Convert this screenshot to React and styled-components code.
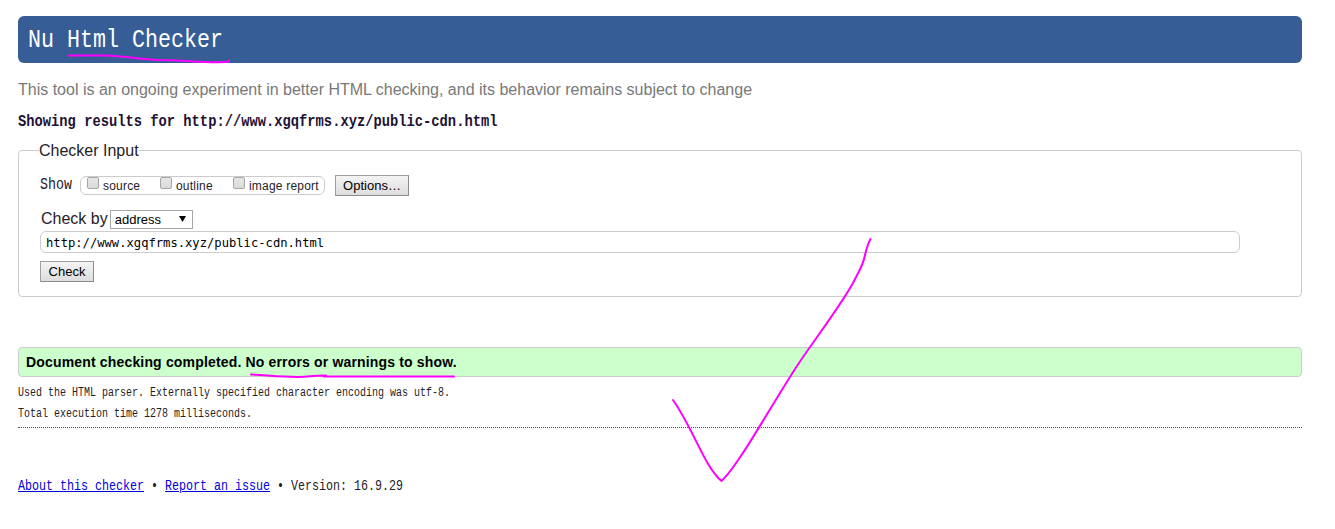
import React from 'react';
import styled, { createGlobalStyle } from 'styled-components';

const GlobalStyle = createGlobalStyle`
  * { box-sizing: border-box; }
  body { margin: 0; background: #fff; color: #1f2126; font-family: "Liberation Sans", Arial, sans-serif; }
`;

const Page = styled.div`
  position: relative;
  height: 529px;
  padding: 16px 33px 0 18px;
  overflow: hidden;
`;

/* Condensed monospace line: every glyph advances by half of the font size. */
const Mono = styled.span`
  display: block;
  width: max-content;
  font-family: "Liberation Mono", monospace;
  font-size: ${(p) => p.$size}px;
  font-weight: ${(p) => (p.$bold ? 700 : 400)};
  line-height: ${(p) => p.$line}px;
  white-space: pre;
  transform: scaleX(0.8333);
  transform-origin: 0 50%;
`;

const Banner = styled.h1`
  margin: 0;
  height: 47px;
  padding: 0 10px;
  border-radius: 6px;
  background: #365d95;
  color: #fff;
`;

const Tagline = styled.p`
  margin: 17px 0 0;
  font-size: 16px;
  line-height: 20px;
  color: #787878;
`;

const ResultsHeading = styled.h2`
  margin: 12px 0 0;
  height: 20px;
  color: #221133;
`;

const Form = styled.fieldset`
  margin: 9px 0 0;
  height: 156px;
  padding: 15px 21px 0;
  border: 1px solid #ccc;
  border-radius: 4px;
  min-width: 0;
`;

const Legend = styled.legend`
  margin-left: -1px;
  padding: 0;
  height: 18px;
  font-size: 16px;
  line-height: 20px;
`;

const ShowRow = styled.div`
  display: flex;
  align-items: center;
  height: 22px;
`;

const ShowLabel = styled.div`
  width: 40px;
`;

const Checks = styled.div`
  display: flex;
  width: 245px;
  height: 19px;
  padding-left: 6px;
  border: 1px solid #ccc;
  border-radius: 6px;
`;

const CheckLabel = styled.label`
  display: flex;
  flex: none;
  width: 73px;
  gap: 4px;
  font-size: 12px;
  letter-spacing: 0.2px;
  line-height: 18px;
  white-space: nowrap;
`;

const Checkbox = styled.input.attrs({ type: 'checkbox' })`
  appearance: none;
  flex: none;
  width: 12px;
  height: 12px;
  margin: 0;
  border: 1px solid #a6a6a6;
  border-radius: 2px;
  background: linear-gradient(#e6e6e6, #dadada);
`;

const Button = styled.button`
  display: block;
  height: 21px;
  width: ${(p) => p.$width}px;
  margin: ${(p) => p.$margin};
  padding: 0;
  border: 1px solid #a0a0a0;
  border-right-color: #8c8c8c;
  border-bottom-color: #8c8c8c;
  border-radius: 0;
  background: linear-gradient(#f4f4f4, #dddddd);
  color: #000;
  font: 13px/19px "Liberation Sans", Arial, sans-serif;
  white-space: nowrap;
`;

const MethodRow = styled.div`
  display: flex;
  align-items: center;
  gap: 2px;
  margin-top: 13px;
  height: 20px;
  padding-left: 1px;
  font-size: 16px;
`;

const Select = styled.div`
  display: flex;
  align-items: center;
  justify-content: space-between;
  width: 83px;
  height: 19px;
  padding: 0 6px 0 4px;
  border: 1px solid #a6a6a6;
  color: #000;
  font-size: 13px;
  line-height: 17px;
`;

const AddressField = styled.input`
  display: block;
  width: 1200px;
  height: 22px;
  margin: 2px 0 0;
  padding: 1px 5px 0;
  border: 1px solid #ccc;
  border-radius: 6px;
  background: #fff;
  color: #000;
  font: 12.16px "DejaVu Sans Mono", monospace;
`;

const Success = styled.p`
  margin: 50px 0 0;
  height: 30px;
  padding-left: 7px;
  border: 1px solid #ccc;
  border-radius: 4px;
  background: #cfc;
  color: #000;
  font-size: 14px;
  font-weight: 700;
  letter-spacing: 0.165px;
  line-height: 29px;
`;

const Details = styled.div`
  height: 51px;
  padding-top: 6px;
  border-bottom: 1px dotted #555;
`;

const Footer = styled.footer`
  margin-top: 48px;
`;

const Link = styled.a`
  color: #0000dd;
  text-decoration: underline;
`;

const Ink = styled.svg`
  position: absolute;
  inset: 0;
  pointer-events: none;
  fill: none;
  stroke: #f0f;
  stroke-width: 2;
  stroke-linecap: round;
  stroke-linejoin: round;
`;

const outputs = ['source', 'outline', 'image report'];

export default function App() {
  return (
    <>
      <GlobalStyle />
      <Page>
        <Banner><Mono $size={26} $line={48}>Nu Html Checker</Mono></Banner>
        <Tagline>This tool is an ongoing experiment in better HTML checking, and its behavior remains subject to change</Tagline>
        <ResultsHeading>
          <Mono $size={16.55} $line={20} $bold>Showing results for http://www.xgqfrms.xyz/public-cdn.html</Mono>
        </ResultsHeading>
        <Form>
          <Legend>Checker Input</Legend>
          <ShowRow>
            <ShowLabel><Mono $size={16} $line={22}>Show</Mono></ShowLabel>
            <Checks>
              {outputs.map((name) => (
                <CheckLabel key={name}><Checkbox />{name}</CheckLabel>
              ))}
            </Checks>
            <Button $width={74} $margin="0 0 0 10px">Options…</Button>
          </ShowRow>
          <MethodRow>
            Check by
            <Select>
              address
              <svg width="7" height="6" viewBox="0 0 7 6"><path d="M0 0H7L3.5 6Z" /></svg>
            </Select>
          </MethodRow>
          <AddressField defaultValue="http://www.xgqfrms.xyz/public-cdn.html" />
          <Button $width={54} $margin="8px 0 0">Check</Button>
        </Form>
        <Success>Document checking completed. No errors or warnings to show.</Success>
        <Details>
          <Mono $size={12} $line={21}>Used the HTML parser. Externally specified character encoding was utf-8.</Mono>
          <Mono $size={12} $line={21}>Total execution time 1278 milliseconds.</Mono>
        </Details>
        <Footer>
          <Mono $size={14} $line={20}>
            <Link>About this checker</Link> • <Link>Report an issue</Link> • Version: 16.9.29
          </Mono>
        </Footer>
        <Ink width="1335" height="529" viewBox="0 0 1335 529">
          <path d="M69 55.5H104C125 56 139 59 158 60C184 60 204 63 225 62Q229 62 229 60.5" />
          <path d="M251 374.5C265 375 279 377 298 377C310 377 317 375 326 375.5M324 376.5H454" />
          <path d="M673 400C694 430 704 466 721.500 481C738 466 769 409 797 366C817 336 839 308 853 283C859 271 863 266 865 255Q868 243 870.500 239" />
        </Ink>
      </Page>
    </>
  );
}
